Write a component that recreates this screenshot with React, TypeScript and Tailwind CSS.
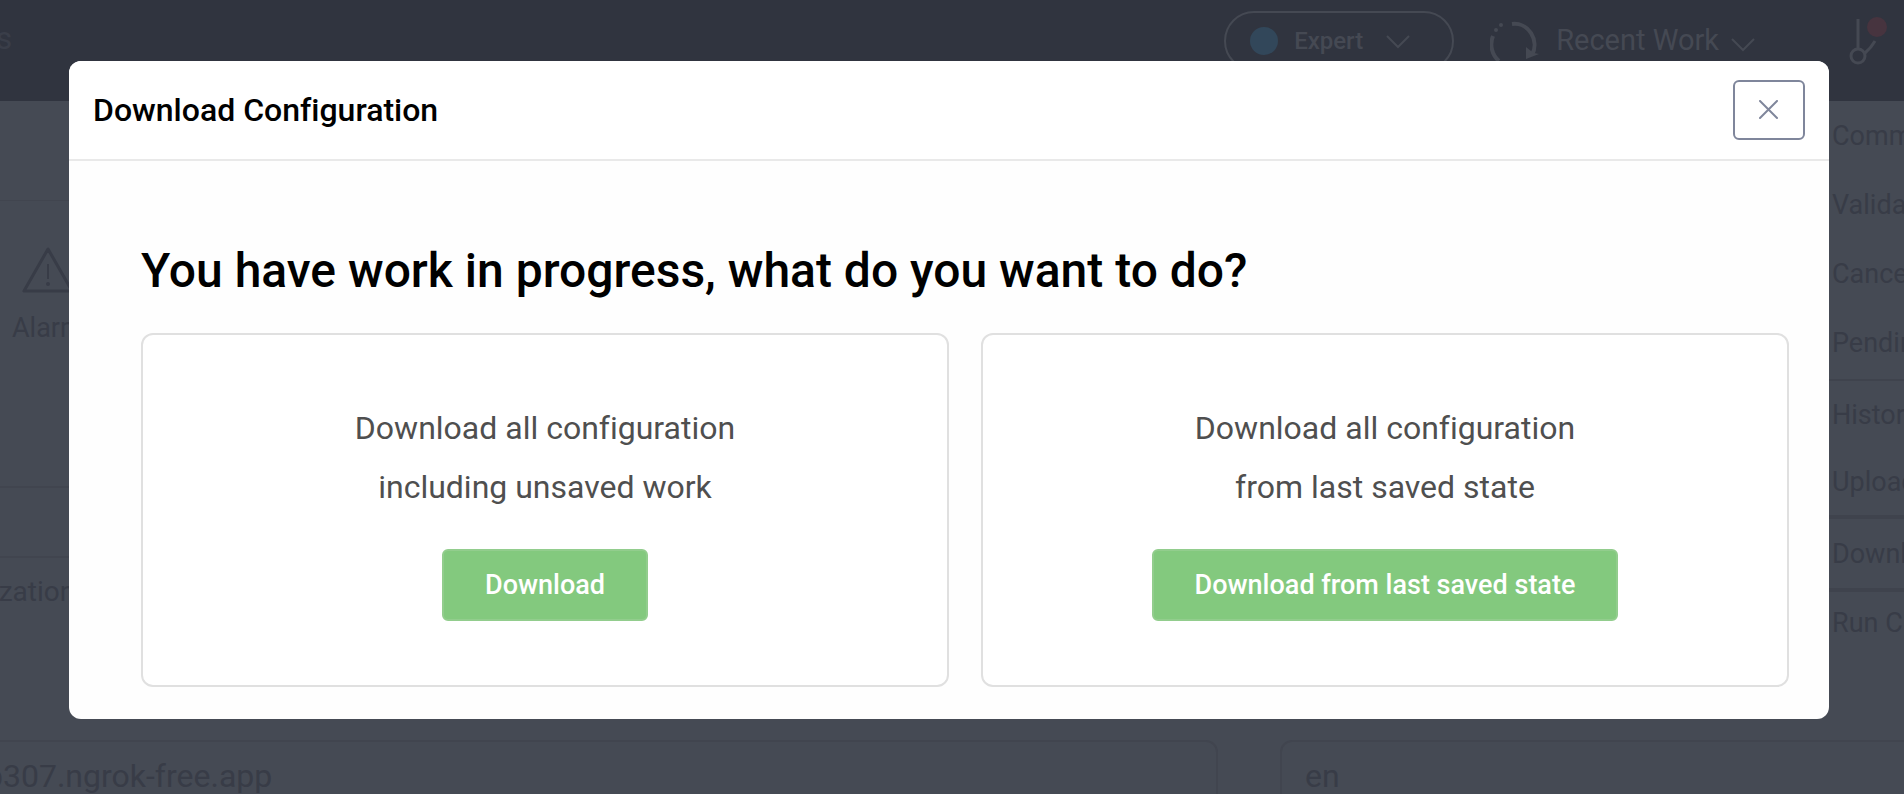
import { ReactNode } from "react";

interface MenuGroup {
    items: string[];
    className: string;
    rowClassName: string;
}

const menuGroups: MenuGroup[] = [
    { items: ["Commit", "Validate", "Cancel", "Pending"], className: "border-b-2 pb-0.5", rowClassName: "h-[69px]" },
    { items: ["History", "Upload"], className: "border-b-4", rowClassName: "h-[67px]" },
    { items: ["Download"], className: "border-b-4", rowClassName: "h-[69px]" },
    { items: ["Run CLI Commands"], className: "", rowClassName: "h-[62px]" },
];

function Chevron() {
    return (
        <svg width="24" height="16" viewBox="0 0 24 16" fill="none" stroke="currentColor" strokeWidth="2">
            <path d="M1 3l11 11L23 3" />
        </svg>
    );
}

function TopBar() {
    return (
        <header className="flex h-[101px] shrink-0 items-start justify-between overflow-hidden bg-[#30343f] text-[#454953]">
            <span className="-ml-[99px] mt-[22px] text-[32px] leading-8 text-[#3a3e49]">Devices</span>
            <div className="flex items-start">
                <button type="button" className="mt-[11px] flex h-[60px] w-[230px] items-center rounded-full border-2 border-[#454953] pl-6 text-2xl font-medium">
                    <span className="mr-4 size-7 rounded-full bg-[#32475a]" />
                    <span className="w-[92px] text-left">Expert</span>
                    <Chevron />
                </button>
                <button type="button" className="ml-9 mt-5 flex items-start text-[29px] leading-10">
                    <svg width="50" height="50" viewBox="0 0 50 50" fill="none" stroke="currentColor" className="mr-4">
                        <path d="M22 4a20 21 0 0 1 20 31" strokeWidth="4" />
                        <path d="M36 27v12l13-5-5-1-3-2z" fill="currentColor" stroke="none" />
                        <path d="M3 16a22 22 0 0 0 6 25" strokeWidth="4" />
                        <circle cx="6" cy="10" r="2" fill="currentColor" stroke="none" />
                        <circle cx="11" cy="5" r="2" fill="currentColor" stroke="none" />
                    </svg>
                    <span className="mr-3">Recent Work</span>
                    <span className="pt-4">
                        <Chevron />
                    </span>
                </button>
                <svg width="40" height="60" viewBox="0 0 40 60" fill="none" stroke="currentColor" strokeWidth="3" className="ml-[93px] mr-4 mt-2">
                    <circle cx="29" cy="19" r="10" fill="#47343f" stroke="none" />
                    <circle cx="10" cy="48" r="7" />
                    <path d="M10 11v30M17 45q6-5 10-12" />
                </svg>
            </div>
        </header>
    );
}

function ActionsMenu() {
    return (
        <nav className="w-[160px] shrink-0 overflow-hidden text-[27px] leading-8">
            {menuGroups.map((group) => (
                <ul key={group.items[0]} className={`border-[#3f434d] ${group.className}`}>
                    {group.items.map((item) => (
                        <li key={item} className={`flex items-center pl-[88px] whitespace-nowrap ${group.rowClassName}`}>
                            <a href="#">{item}</a>
                        </li>
                    ))}
                </ul>
            ))}
        </nav>
    );
}

function Page() {
    return (
        <div className="flex h-screen flex-col overflow-hidden bg-[#454a54] text-[#383c47]">
            <TopBar />
            <div className="flex h-[639px] shrink-0 justify-between overflow-hidden">
                <div className="grow">
                    <div className="h-[100px] border-b border-[#41454f]" />
                    <div className="flex h-[287px] flex-col border-b-2 border-[#41454f] pl-3 pt-[45px]">
                        <svg width="52" height="48" viewBox="0 0 52 48" fill="none" stroke="currentColor" strokeWidth="3" strokeLinejoin="round" className="ml-[10px]">
                            <path d="M26 3L2 45h48z" />
                            <path d="M26 18v15" strokeWidth="2" />
                            <circle cx="26" cy="38" r="2" fill="currentColor" stroke="none" />
                        </svg>
                        <span className="mt-[18px] text-[27px] leading-8">Alarms</span>
                    </div>
                    <div className="h-[70px] border-b-2 border-[#41454f]" />
                    <p className="-ml-[83px] mt-[18px] text-[28px] leading-8">Organization</p>
                </div>
                <ActionsMenu />
            </div>
            <div className="flex shrink-0 gap-[62px] overflow-hidden text-[32px]">
                <input
                    aria-label="Host"
                    readOnly
                    defaultValue="b307.ngrok-free.app"
                    className="-ml-10 h-[72px] w-[1258px] rounded-xl border-2 border-[#41454f] pl-[23px]"
                />
                <input
                    aria-label="Language"
                    readOnly
                    defaultValue="en"
                    className="-mr-10 h-[72px] min-w-0 grow rounded-xl border-2 border-[#41454f] pl-[23px]"
                />
            </div>
        </div>
    );
}

interface OptionCardProps {
    action: string;
    children: ReactNode;
}

function OptionCard(props: Readonly<OptionCardProps>) {
    return (
        <div className="flex h-[354px] flex-1 flex-col items-center rounded-xl border-2 border-[#e0e0e0] bg-white pt-16">
            <p className="text-center text-[32px] leading-[59px] text-[#4f4f4f]">{props.children}</p>
            <button type="button" className="mt-8 h-[72px] rounded-md border-2 border-[#92cd8d] bg-[#83c97e] px-[41px] text-[27px] font-medium text-white">
                {props.action}
            </button>
        </div>
    );
}

function DownloadDialog() {
    return (
        <div
            role="dialog"
            aria-modal="true"
            aria-labelledby="dialog-title"
            className="absolute inset-x-0 top-[61px] mr-[75px] ml-[69px] overflow-hidden rounded-xl bg-[#fefefe]"
        >
            <div className="flex h-[100px] items-center justify-between border-b-2 border-[#e9e9e9] bg-white px-6">
                <h1 id="dialog-title" className="text-[32px] font-medium text-black">Download Configuration</h1>
                <button type="button" aria-label="Close" className="flex h-[60px] w-[72px] items-center justify-center rounded-md border-2 border-[#7f869b] text-[#7f869b]">
                    <svg width="20" height="20" viewBox="0 0 20 20" fill="none" stroke="currentColor" strokeWidth="2" strokeLinecap="round">
                        <path d="M1 1l17 17M18 1L1 18" />
                    </svg>
                </button>
            </div>
            <div className="pt-[78px] pr-10 pb-8 pl-[72px]">
                <h2 className="mb-[30px] text-5xl leading-16 font-medium text-black">You have work in progress, what do you want to do?</h2>
                <div className="flex gap-8">
                    <OptionCard action="Download">
                        Download all configuration
                        <br />
                        including unsaved work
                    </OptionCard>
                    <OptionCard action="Download from last saved state">
                        Download all configuration
                        <br />
                        from last saved state
                    </OptionCard>
                </div>
            </div>
        </div>
    );
}

export default function App() {
    return (
        <main className="relative font-[Roboto,sans-serif] [font-variant-ligatures:none]">
            <Page />
            <DownloadDialog />
        </main>
    );
}
